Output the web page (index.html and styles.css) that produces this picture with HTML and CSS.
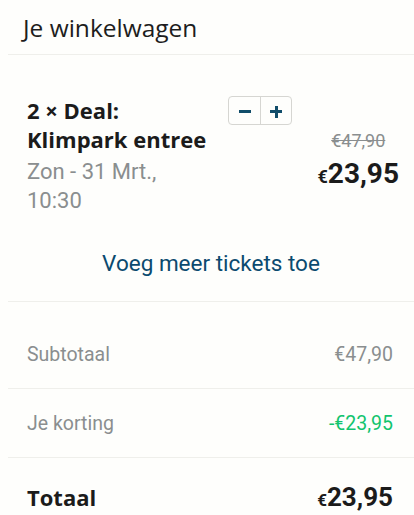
FILE: index.html
```html
<!DOCTYPE html>
<html lang="nl">
<head>
<meta charset="utf-8">
<link rel="stylesheet" href="styles.css">
</head>
<body>
<div class="cart">
  <div class="cart-header">Je winkelwagen</div>
  <div class="item">
    <div class="item-info">
      <div class="item-title">2 × Deal:<br>Klimpark entree</div>
      <div class="item-date">Zon - 31 Mrt.,<br>10:30</div>
    </div>
    <div class="stepper">
      <button class="step" aria-label="minder"><span class="bar"></span></button>
      <button class="step" aria-label="meer"><span class="bar"></span><span class="bar vertical"></span></button>
    </div>
    <div class="item-prices">
      <div class="old-price">€47,90</div>
      <div class="new-price"><span class="cur">€</span>23,95</div>
    </div>
  </div>
  <div class="add-more">Voeg meer tickets toe</div>
  <div class="summary">
    <div class="row"><span>Subtotaal</span><span>€47,90</span></div>
    <div class="row"><span>Je korting</span><span class="discount">-€23,95</span></div>
    <div class="row total"><span class="total-label">Totaal</span><span class="total-amount"><span class="cur">€</span>23,95</span></div>
  </div>
</div>
</body>
</html>
```

FILE: styles.css
```css
html, body {
  margin: 0;
  padding: 0;
  background: #fefefc;
}
body {
  font-family: Roboto, "Liberation Sans", sans-serif;
  color: #1b1b1b;
  overflow: hidden;
}
.cart {
  margin-left: 8px;
}
.cart-header {
  font-family: "Open Sans", "Liberation Sans", sans-serif;
  font-size: 24.5px;
  line-height: 30px;
  padding: 13px 0 11px 15px;
  border-bottom: 1px solid #efefeb;
  color: #1d1d1d;
}
.item {
  display: flex;
  align-items: flex-start;
  padding: 41px 15px 0 19px;
}
.item-info {
  flex: 0 0 201px;
}
.item-title {
  font-family: "Open Sans", "Liberation Sans", sans-serif;
  font-weight: 700;
  font-size: 22px;
  line-height: 29px;
}
.item-date {
  color: #8a8e8f;
  font-size: 22px;
  line-height: 29px;
  margin-top: 3px;
}
.stepper {
  display: flex;
  flex: none;
  border: 1px solid #d6d6d2;
  border-radius: 4px;
  height: 27px;
}
.step {
  position: relative;
  width: 31px;
  height: 27px;
  border: 0;
  background: transparent;
  padding: 0;
}
.step + .step {
  border-left: 1px solid #d6d6d2;
}
.bar {
  position: absolute;
  left: 50%;
  top: 50%;
  width: 12px;
  height: 3px;
  margin: -1px 0 0 -6px;
  background: #114d6a;
}
.bar.vertical {
  width: 3px;
  height: 12px;
  margin: -5px 0 0 -1.5px;
}
.item-prices {
  margin-left: auto;
  text-align: center;
  padding-top: 33px;
}
.old-price {
  color: #8a8e8f;
  font-size: 18px;
  line-height: 24px;
  text-decoration: line-through;
}
.new-price {
  font-weight: 700;
  font-size: 28px;
  line-height: 36px;
  margin-top: 3px;
  white-space: nowrap;
}
.cur {
  font-size: 18px;
}
.add-more {
  text-align: center;
  color: #0b4a6f;
  font-size: 22.5px;
  line-height: 30px;
  padding: 33px 0 23px;
  border-bottom: 1px solid #efefeb;
}
.summary {
  padding-top: 18px;
}
.row {
  display: flex;
  justify-content: space-between;
  align-items: center;
  height: 68px;
  padding: 0 21px 0 19px;
  color: #8a8e8f;
  font-size: 19.5px;
  border-bottom: 1px solid #efefeb;
}
.discount {
  color: #12c46e;
}
.row.total {
  border-bottom: 0;
  height: auto;
  padding-top: 24px;
  color: #1b1b1b;
  font-weight: 700;
}
.total-label {
  font-family: "Open Sans", "Liberation Sans", sans-serif;
  font-size: 22px;
}
.total-amount {
  font-size: 26px;
}
.total-amount .cur {
  font-size: 17px;
}
```
